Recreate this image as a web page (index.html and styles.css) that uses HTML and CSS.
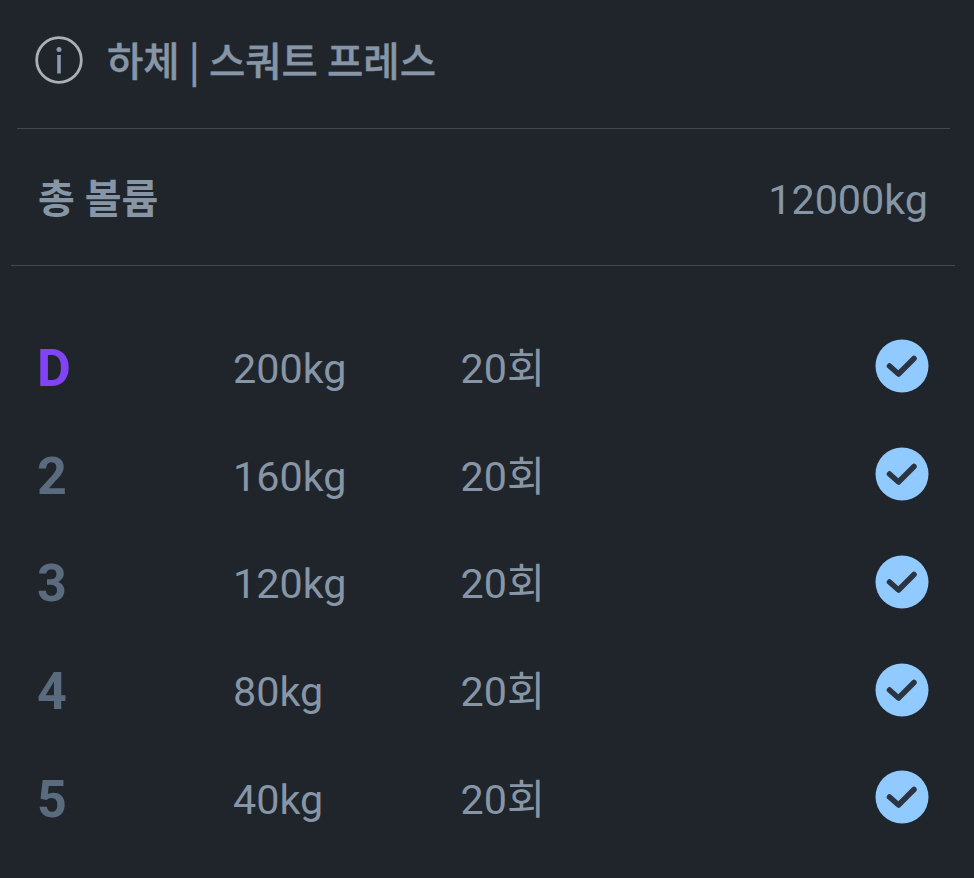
FILE: index.html
```html
<!DOCTYPE html>
<html lang="ko">

<head>
    <meta charset="UTF-8">
    <meta name="viewport" content="width=device-width, initial-scale=1.0">
    <title>운동 기록</title>
    <link rel="stylesheet" href="styles.css">
</head>

<body>
    <header class="title-bar">
        <svg class="info-icon" width="48" height="48" viewBox="0 0 48 48" fill="none">
            <circle cx="24" cy="24" r="22.3" stroke="#a9b1b7" stroke-width="2.8"/>
            <circle cx="24" cy="13.5" r="2.5" fill="#8a9bae"/>
            <rect x="22.2" y="19" width="3.6" height="18.5" fill="#8a9bae"/>
        </svg>
        <h1 class="title">하체 | 스쿼트 프레스</h1>
    </header>

    <section class="volume">
        <span class="volume-label">총 볼륨</span>
        <span class="volume-value">12000kg</span>
    </section>

    <section class="sets">
        <div class="set-row">
            <span class="set-no set-drop">D</span>
            <span class="set-weight">200kg</span>
            <span class="set-reps">20회</span>
            <svg class="check" viewBox="0 0 54 54"><circle cx="27" cy="27" r="26.5" fill="#90caff"/><path d="M14.5 27 L23.5 35 L39 19.5" fill="none" stroke="#2b3440" stroke-width="5.5" stroke-linecap="round" stroke-linejoin="round"/></svg>
        </div>
        <div class="set-row">
            <span class="set-no">2</span>
            <span class="set-weight">160kg</span>
            <span class="set-reps">20회</span>
            <svg class="check" viewBox="0 0 54 54"><circle cx="27" cy="27" r="26.5" fill="#90caff"/><path d="M14.5 27 L23.5 35 L39 19.5" fill="none" stroke="#2b3440" stroke-width="5.5" stroke-linecap="round" stroke-linejoin="round"/></svg>
        </div>
        <div class="set-row">
            <span class="set-no">3</span>
            <span class="set-weight">120kg</span>
            <span class="set-reps">20회</span>
            <svg class="check" viewBox="0 0 54 54"><circle cx="27" cy="27" r="26.5" fill="#90caff"/><path d="M14.5 27 L23.5 35 L39 19.5" fill="none" stroke="#2b3440" stroke-width="5.5" stroke-linecap="round" stroke-linejoin="round"/></svg>
        </div>
        <div class="set-row">
            <span class="set-no">4</span>
            <span class="set-weight">80kg</span>
            <span class="set-reps">20회</span>
            <svg class="check" viewBox="0 0 54 54"><circle cx="27" cy="27" r="26.5" fill="#90caff"/><path d="M14.5 27 L23.5 35 L39 19.5" fill="none" stroke="#2b3440" stroke-width="5.5" stroke-linecap="round" stroke-linejoin="round"/></svg>
        </div>
        <div class="set-row">
            <span class="set-no">5</span>
            <span class="set-weight">40kg</span>
            <span class="set-reps">20회</span>
            <svg class="check" viewBox="0 0 54 54"><circle cx="27" cy="27" r="26.5" fill="#90caff"/><path d="M14.5 27 L23.5 35 L39 19.5" fill="none" stroke="#2b3440" stroke-width="5.5" stroke-linecap="round" stroke-linejoin="round"/></svg>
        </div>
    </section>
</body>

</html>
```

FILE: styles.css
```css
html {
    background-color: #20252c;
}

body {
    margin: 0;
    height: 878px;
    overflow: hidden;
    background-color: #20252c;
    color: #8796a6;
    font-family: Roboto, "Noto Sans CJK KR", sans-serif;
    font-size: 41.3px;
    line-height: 48px;
}

.title-bar {
    display: flex;
    align-items: center;
    gap: 24px;
    height: 129px;
    margin: 0 24px 0 17px;
    padding: 0 0 8px 18px;
    box-sizing: border-box;
    border-bottom: 1px solid #414850;
}

.info-icon {
    flex: none;
}

.title {
    margin: 0 0 3px;
    font-family: "Noto Sans CJK KR", sans-serif;
    font-size: 39.5px;
    font-weight: 500;
    word-spacing: -2px;
    line-height: 48px;
    white-space: nowrap;
    -webkit-text-stroke: 0.4px #8796a6;
}

.volume {
    display: flex;
    align-items: center;
    justify-content: space-between;
    height: 137px;
    margin: 0 19px 0 11px;
    padding: 5px 27px 0;
    box-sizing: border-box;
    border-bottom: 1px solid #414850;
}

.volume-label {
    font-size: 40px;
    font-weight: 700;
}

.volume-value {
    font-weight: 400;
}

.sets {
    padding: 49px 45px 0 37px;
}

.set-row {
    display: flex;
    align-items: center;
    height: 107.75px;
}

.set-no {
    width: 196px;
    font-size: 52px;
    font-weight: 700;
    color: #5a6b7d;
}

.set-drop {
    color: #8144f4;
}

.set-weight {
    width: 227.5px;
}

.set-reps {
    flex: 1;
}

.check {
    width: 54px;
    height: 54px;
    flex: none;
    margin-bottom: 5px;
}
```
